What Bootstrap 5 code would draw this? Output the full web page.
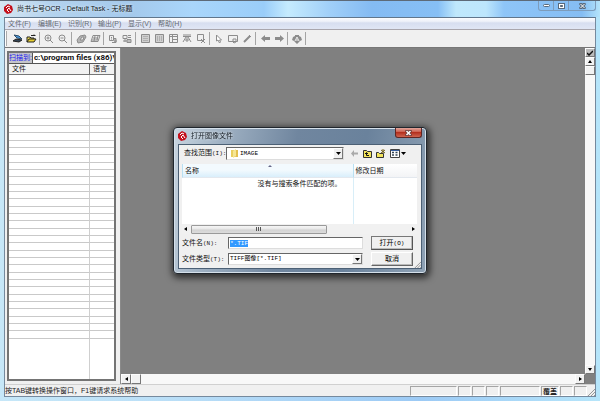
<!DOCTYPE html>
<html lang="zh-CN">
<head>
<meta charset="utf-8">
<meta name="viewport" content="width=device-width, initial-scale=1">
<title>尚书七号OCR - Default Task - 无标题</title>
<link href="https://cdn.jsdelivr.net/npm/bootstrap@5.3.0/dist/css/bootstrap.min.css" rel="stylesheet">
<style>
body{font:7px/10px "Liberation Sans","Noto Sans CJK SC",sans-serif;color:#111;background:#c2e9fb}
button,input,select{font:inherit;color:inherit;border-radius:0}
button{padding:0;border:0;background:none;line-height:10px}
svg{display:block}
.app{background:linear-gradient(90deg,#c6e7f8,#b9def7 30%,#9ccaf5 70%,#b6e5fa);border-top:1px solid #5d6a78}
.sky{height:16px;background:linear-gradient(90deg,#d6e6f2 0,#b4d3ee 8%,#a4c9ec 22%,#a9d6fb 32%,#9acdf9 44%,#c5ebfe 48%,#a0cff8 55%,#84bbf3 62%,#86bff5 73%,#bfe8fc 76%,#bde6fc 81%,#8ec5f8 84%,#85bdf3 97%,#b4e4fa 100%)}
.title-text{font-size:7px;color:#101820;text-shadow:0 0 3px #fff}
.winbtns{height:10px;border:1px solid #7d9cbb;border-top:0;border-radius:0 0 3px 3px}
.winbtns button{width:15px;height:9px;border-right:1px solid #7d9cbb}
.winbtns button:last-child{width:26px;border:0}
.frame-in{margin:0 4px 4px;border:1px solid #75899d;border-top-color:#60768c;background:#f0f0f0}
.menus{height:12px;background:linear-gradient(#fbfcfe,#eef1f9 30%,#d7def0 45%,#dfe5f4 90%);border-bottom:1px solid #a9a6ad;padding-left:3px}
.menus button{width:30px;text-align:left;color:#666b74}
.tools{height:18px;padding-left:5px;border-bottom:1px solid #777;position:relative}
.tools button{width:14px;height:14px;color:#8c8c8c;flex:none}
.tools button svg{margin:auto}
.tsep{width:4px;height:13px;background:linear-gradient(#a4a4a4,#a4a4a4) 1px 0/1px 100% no-repeat;flex:none}
.grip{width:2px;height:15px;border-left:1px solid #fff;border-right:1px solid #aaa}
.side{width:116px;padding:3px 4px 3px 2px;border-right:1px solid #8a8a8a;flex:none}
.files{border:2px solid #747474;background:#fff;overflow:hidden}
.scanrow{height:11px;border-bottom:1px solid #555}
.scanrow button{width:26px;background:#c6c6ca;color:#2020f0;border-right:1px solid #555;white-space:nowrap}
.scanrow input{min-width:0;border:0;padding:0 0 0 1px;background:#fff;font-family:Roboto,"Liberation Sans",sans-serif;font-weight:bold;font-size:8px;outline:0}
.filetable{width:100%;table-layout:fixed;border-collapse:separate;border-spacing:0}
.filetable th{height:11px;padding:0 3px;background:#f2f2f2;font-weight:normal;line-height:10px;border-bottom:1px solid #777}
.filetable th:first-child{border-right:1px solid #666}
.filetable td{height:7px;padding:0;font-size:0;line-height:0;border-bottom:1px solid #c9c9c9}
.filetable tr:nth-child(3n) td{height:8px}
.filetable td:first-child{border-right:1px solid #cfcfcf}
.filetable tr.rest td{border-bottom:0;height:80px}
.canvas-area{background:#808080}
.sbv{width:10px;background:#f8f8f8;flex:none}
.sbh{height:10px;background:#f8f8f8;flex:none}
.sbb{width:10px;height:9px;background:#f2f2f2;border:1px solid;border-color:#fdfdfd #777 #777 #fdfdfd;display:flex;align-items:center;justify-content:center;flex:none}
.sbb.chk{background:#bbb}
.sbh .sbb{height:10px}
.corner{width:10px;height:10px;background:#808080}
.status{height:12px;border-top:1px solid #d0d0d0;color:#222}
.cell{height:10px;border:1px solid;border-color:#a5a5a5 #fff #fff #a5a5a5;margin-right:1px;width:13px;flex:none;line-height:9px;text-align:center;white-space:nowrap}
.cell.wide{width:47px}.cell.mid{width:40px}.cell.ovr{width:18px;font-weight:bold}

.dlg{width:254px;border:1px solid #20262d;border-radius:4px;background:linear-gradient(100deg,#c9d5e0 0,#9fb1c3 18%,#70869f 45%,#6a829c 70%,#8fa2b5 100%);box-shadow:inset 0 0 0 1px #d5e0ea,1px 2px 7px 2px rgba(0,0,0,.65);padding:0 4px 4px}
.dlg-title{height:16px;color:#0c1016}
.closebtn{width:27px;height:10px;border:1px solid #5e2624;border-top:0;border-radius:0 0 3px 3px;background:linear-gradient(#e0a79d,#cc5a4a 45%,#b4301f 50%,#cf6450);align-self:flex-start}
.dlg-body{border:1px solid #4c6075;background:#f0f0f0;padding:2px 4px 2px 3px}
.half{font-family:"Liberation Mono",monospace;font-size:6px}
.field{height:13px;background:#fff;border:1px solid;border-color:#666 #ddd #ddd #666;position:relative}
.field select,.field input{appearance:none;border:0;outline:0;background:transparent;width:100%;height:100%;padding:0 1px;display:block;font:6px/10px "Liberation Mono","Noto Sans CJK SC",monospace;color:#000;caret-color:transparent}
.field.edit{height:12px}
.field input::selection{background:#3399ff;color:#fff}
.drop{position:absolute;right:0;top:0;bottom:0;width:10px;background:#f0f0f0;border:1px solid;border-color:#fff #777 #777 #fff;display:flex;align-items:center;justify-content:center;pointer-events:none}
.look{width:118px}
.look-label{width:44px;padding-left:2px}
.list{background:#fff;position:relative}
.list table{width:100%;table-layout:fixed;border-collapse:separate;border-spacing:0}
.list th{height:14px;padding:0 2px;font-weight:normal;line-height:10px;background:linear-gradient(#fff,#f3f4f6);border-bottom:1px solid #e3e8ee}
.list th:first-child{background:linear-gradient(#f3fafe 45%,#d9effb);border-right:1px solid #b9e0f2;border-left:1px solid #b9e0f2;position:relative}
.list td{height:46px;padding:0;vertical-align:top}
.list td:first-child{border-right:1px solid #d8eef8}
.sortmark{position:absolute;top:1px;left:50%}
.empty-note{position:absolute;top:15px;left:0;right:0;text-align:center}
.hbar{height:10px;background:#f1f1f1;padding:0 2px}
.hbar .thumb{width:136px;height:9px;margin-left:4px;border:1px solid #9a9a9a;border-radius:1px;background:linear-gradient(#f6f6f6,#e6e6e6 48%,#d2d2d2 52%,#dcdcdc)}
.form-grid{display:grid;grid-template-columns:46px minmax(0,1fr) 42px;row-gap:2px;padding:2px 4px 0 0;align-items:center}
.form-grid .dbtn{height:14px;background:#f0f0f0;border:1px solid;border-color:#fff #666 #666 #fff;box-shadow:inset -1px -1px #bbb;color:#000}
.form-grid .dbtn.main{border-color:#777 #555 #555 #777}
.form-grid .field{margin-right:8px}
.iconbtn{width:13px;height:12px;display:flex;align-items:center;justify-content:center}
.sizer{position:absolute;right:0;bottom:0}
</style>
<script src="https://cdn.jsdelivr.net/npm/bootstrap@5.3.0/dist/js/bootstrap.bundle.min.js"></script>
</head>
<body>
<div class="app vh-100 d-flex flex-column overflow-hidden">
  <header class="sky d-flex align-items-center justify-content-between flex-shrink-0 ps-1 pe-1">
    <div class="d-flex align-items-center title-text gap-1 text-nowrap">
      <svg width="9" height="10" viewBox="0 0 9 10"><path d="M4 0 8 2 9 6 7 9 3 10 0 7 0 3Z" fill="#c4101c"/><path d="M2 4 4 2 6 3M3 6 5 4 7 7M3 6l2 2" stroke="#fff" fill="none"/></svg>
      <span>尚书七号OCR - Default Task - 无标题</span>
    </div>
    <div class="winbtns d-flex align-self-start">
      <button aria-label="最小化"><svg class="m-auto" width="7" height="4" viewBox="0 0 7 4"><rect x=".5" y=".5" width="6" height="2" rx="1" fill="#fff" stroke="#596a7c"/></svg></button>
      <button aria-label="最大化"><svg class="m-auto" width="7" height="6" viewBox="0 0 7 6"><rect x=".5" y=".5" width="6" height="5" fill="#fff" stroke="#596a7c"/><path d="M2.500 2.500h2v1h-2z" stroke="#596a7c"/></svg></button>
      <button aria-label="关闭"><svg class="m-auto" width="7" height="6" viewBox="0 0 7 6"><path d="m1 0 5 6M6 0 1 6" stroke="#596a7c" stroke-width="3"/><path d="m1.500 1 4 4M5.500 1l-4 4" stroke="#fff"/></svg></button>
    </div>
  </header>

  <div class="frame-in flex-grow-1 d-flex flex-column overflow-hidden">
    <nav class="menus d-flex align-items-center flex-shrink-0" aria-label="菜单">
      <button>文件(F)</button><button>编辑(E)</button><button>识别(R)</button><button>输出(P)</button><button>显示(V)</button><button>帮助(H)</button>
    </nav>

    <div class="tools d-flex align-items-center flex-shrink-0" role="toolbar" aria-label="工具">
      <span class="grip position-absolute start-0"></span>
      <button aria-label="扫描"><svg width="11" height="9" viewBox="0 0 11 9"><path d="m2 1 5 1 3 3-5-1Z" fill="#4a9be0" stroke="#2b4a66"/><path d="m1 7 3-2 6 1-3 2Z" fill="#345" stroke="#222"/></svg></button>
      <button aria-label="打开"><svg width="11" height="9" viewBox="0 0 11 9"><path d="M1 8V3h3l1 1h3v1" fill="#ecd94c" stroke="#222"/><path d="m1 8 2-3h7L8 8Z" fill="#e8d030" stroke="#222"/><path d="M5 1.500h4m-1-1 1.500 1.500" stroke="#222" fill="none"/></svg></button>
      <span class="tsep"></span>
      <button aria-label="放大"><svg width="10" height="10" viewBox="0 0 10 10" fill="none" stroke="currentColor"><circle cx="4" cy="4" r="3"/><path d="M6 6l3 3M2.500 4h3M4 2.500v3"/></svg></button>
      <button aria-label="缩小"><svg width="10" height="10" viewBox="0 0 10 10" fill="none" stroke="currentColor"><circle cx="4" cy="4" r="3"/><path d="M6 6l3 3M2.500 4h3"/></svg></button>
      <span class="tsep"></span>
      <button aria-label="旋转"><svg width="11" height="10" viewBox="0 0 11 10" stroke="currentColor"><path d="M1 6 4 2l5-1 1 2-3 5-5 1Z" fill="#b5b5b5"/><path d="m4 6 2-3 2 0-1 3Z" fill="#eee"/></svg></button>
      <button aria-label="倾斜校正"><svg width="11" height="9" viewBox="0 0 11 9" stroke="currentColor" fill="none"><path d="M3 1.500h7L8 7.500H1Z"/><path d="M3 4h5M2 6h6M5 2 4 7M8 2 7 6"/></svg></button>
      <span class="tsep"></span>
      <button aria-label="版面分析"><svg width="10" height="10" viewBox="0 0 10 10" stroke="currentColor" fill="none"><path d="M1.500 1.500h4v5h-4zM3 3.500h1M3 5h1M5 4.500h3v4H4M6 7h3M7 5v4"/></svg></button>
      <button aria-label="识别"><svg width="10" height="10" viewBox="0 0 10 10" stroke="currentColor" fill="none"><path d="M1 1.500h4v3H1zM6 1.500h3M6 3.500h3M3 5v3M5 5.500h4v3H5zM1 7h8"/></svg></button>
      <span class="tsep"></span>
      <button aria-label="横栏"><svg width="9" height="9" viewBox="0 0 9 9" stroke="currentColor" fill="#d0d0d0"><path d="M.5.500h8v8h-8z"/><path d="M2 2.500h5M2 4.500h5M2 6.500h5" stroke="#b0b0b0"/></svg></button>
      <button aria-label="竖栏"><svg width="9" height="9" viewBox="0 0 9 9" stroke="currentColor" fill="#d0d0d0"><path d="M.5.500h8v8h-8z"/><path d="M2.500 2v5M4.500 2v5M6.500 2v5" stroke="#b0b0b0"/></svg></button>
      <button aria-label="表格栏"><svg width="9" height="9" viewBox="0 0 9 9" stroke="currentColor" fill="none"><path d="M.5.500h8v8h-8zM3.500 1v7.500M3.500 5.500h5M0 2.500h9"/></svg></button>
      <button aria-label="图像栏"><svg width="10" height="9" viewBox="0 0 10 9" stroke="currentColor" fill="none"><path d="M1 1h8M1 2.500h8M4 3 1 8M6 3l3 5M5 3v5M3 6h4"/></svg></button>
      <button aria-label="删除栏"><svg width="10" height="10" viewBox="0 0 10 10" stroke="currentColor" fill="none"><path d="M1.500.500h6v6h-6zM5 5l4 4M9 5 5 9"/></svg></button>
      <span class="tsep"></span>
      <button aria-label="选择"><svg width="8" height="10" viewBox="0 0 8 10" stroke="currentColor" fill="#fff"><path d="M1.500 1v6l1.500-1 1.500 3 1-1-1-2h2Z"/></svg></button>
      <button aria-label="区域"><svg width="10" height="10" viewBox="0 0 10 10" stroke="currentColor" fill="none"><path d="M.5 1.500h9v6h-9zM5 5h3v3L6 9 5 8Z"/></svg></button>
      <button aria-label="画笔"><svg width="9" height="9" viewBox="0 0 9 9" stroke="currentColor"><path d="M1 8 7 2" stroke-width="2"/><path d="m6 1 2 2"/></svg></button>
      <span class="tsep"></span>
      <button aria-label="上一页"><svg width="9" height="7" viewBox="0 0 9 7"><path d="M0 3.500 4 0v2h5v3H4v2Z" fill="currentColor"/></svg></button>
      <button aria-label="下一页"><svg width="9" height="7" viewBox="0 0 9 7"><path d="M9 3.500 5 0v2H0v3h5v2Z" fill="currentColor"/></svg></button>
      <span class="tsep"></span>
      <button aria-label="关于"><svg width="10" height="10" viewBox="0 0 10 10"><path d="M3 1h4v1l2 1 1 3-2 1-3 3-3-3-2-1 1-3 2-1Z" fill="currentColor"/><path d="M3 7 5 3l2 4M5 5v2" stroke="#eee" fill="none"/></svg></button>
      <span class="tsep"></span>
    </div>

    <div class="d-flex flex-grow-1 overflow-hidden">
      <aside class="side d-flex flex-column">
        <div class="files flex-grow-1">
          <div class="scanrow d-flex">
            <button id="scan">扫描到:</button>
            <input class="flex-grow-1" aria-labelledby="scan" value="c:\program files (x86)\j">
          </div>
          <table class="filetable">
            <colgroup><col><col style="width:24px"></colgroup>
            <thead><tr><th>文件</th><th>语言</th></tr></thead>
            <tbody id="rows"></tbody>
          </table>
        </div>
      </aside>

      <main class="flex-grow-1 d-flex flex-column">
        <div class="d-flex flex-grow-1">
          <div class="canvas-area flex-grow-1"></div>
          <div class="sbv d-flex flex-column">
            <button class="sbb chk" aria-label="确认"><svg width="6" height="6" viewBox="0 0 6 6"><path d="m0 3 2 2 4-4" stroke="#111" stroke-width="1.500" fill="none"/></svg></button>
            <button class="sbb" aria-label="向上"><svg width="4" height="3" viewBox="0 0 4 3"><path d="M0 3h4L2 0Z"/></svg></button>
            <span class="sbb"></span>
            <button class="sbb mt-auto" aria-label="向下"><svg width="4" height="3" viewBox="0 0 4 3"><path d="M0 0h4L2 3Z"/></svg></button>
          </div>
        </div>
        <div class="sbh d-flex">
          <button class="sbb" aria-label="向左"><svg width="3" height="4" viewBox="0 0 3 4"><path d="M3 0v4L0 2Z"/></svg></button>
          <span class="sbb"></span>
          <button class="sbb ms-auto" aria-label="向右"><svg width="3" height="4" viewBox="0 0 3 4"><path d="M0 0v4l3-2Z"/></svg></button>
          <span class="corner"></span>
        </div>
      </main>
    </div>

    <footer class="status d-flex align-items-center flex-shrink-0 position-relative">
      <span class="me-auto text-nowrap">按TAB键转换操作窗口，F1键请求系统帮助</span>
      <span class="cell wide"></span><span class="cell"></span><span class="cell"></span><span class="cell"></span><span class="cell mid"></span><span class="cell ovr">覆盖</span><span class="cell"></span><span class="cell me-2"></span>
      <svg class="sizer" width="8" height="8" viewBox="0 0 8 8"><path d="m1 8 7-7M4 8l4-4M7 8l1-1" stroke="#999"/></svg>
    </footer>
  </div>
</div>

<div class="position-fixed top-0 start-0 w-100 h-100 d-flex align-items-center justify-content-center">
  <section class="dlg" role="dialog" aria-labelledby="dlgTitle">
    <div class="dlg-title d-flex align-items-center justify-content-between">
      <div class="d-flex align-items-center gap-1">
        <svg width="9" height="10" viewBox="0 0 9 10"><path d="M4 0 8 2 9 6 7 9 3 10 0 7 0 3Z" fill="#c4101c"/><path d="M2 4 4 2 6 3M3 6 5 4 7 7M3 6l2 2" stroke="#fff" fill="none"/></svg>
        <span id="dlgTitle" class="title-text">打开图像文件</span>
      </div>
      <button class="closebtn" aria-label="关闭"><svg class="m-auto" width="7" height="6" viewBox="0 0 7 6"><path d="m1 0 5 6M6 0 1 6" stroke="#6b3a38" stroke-width="3"/><path d="m1.500 1 4 4M5.500 1l-4 4" stroke="#fff" stroke-width="1.500"/></svg></button>
    </div>
    <form class="dlg-body position-relative" onsubmit="return false">
      <div class="d-flex align-items-center mb-1">
        <label for="look" class="look-label text-nowrap">查找范围<span class="half">(I):</span></label>
        <div class="field look d-flex align-items-center">
          <svg class="ms-1 flex-shrink-0" width="8" height="9" viewBox="0 0 8 9"><path d="M0 1h3l1 7H0Z" fill="#e9cf60"/><path d="m2 2 3-2v7L2 9Z" fill="#f6e694"/><path d="M5 1h2v7H3l2-1Z" fill="#e3bf4d"/></svg>
          <select id="look"><option>IMAGE</option></select>
          <span class="drop"><svg width="5" height="3" viewBox="0 0 5 3"><path d="M0 0h5L2.500 3Z"/></svg></span>
        </div>
        <div class="d-flex ms-1">
          <button type="button" class="iconbtn" aria-label="后退"><svg width="7" height="7" viewBox="0 0 7 7"><path d="M0 3.500 3 0v2.500h4v2H3V7Z" fill="#aaa"/></svg></button>
          <button type="button" class="iconbtn" aria-label="向上一级"><svg width="9" height="8" viewBox="0 0 9 8"><path d="M.5 7.500v-7h3l1 1h4v6Z" fill="#f3e45c" stroke="#333"/><path d="M3.500 3v2.500H6M2 4l1.500-1.500L5 4" stroke="#111" fill="none"/></svg></button>
          <button type="button" class="iconbtn" aria-label="新建文件夹"><svg width="10" height="9" viewBox="0 0 10 9"><path d="M.5 8.500v-5h2l1 1h4v4Z" fill="#f3e45c" stroke="#333"/><path d="m5 4 4-3M7 0v4M5 1l4 3" stroke="#77651c"/></svg></button>
          <button type="button" class="iconbtn ms-1" aria-label="查看"><svg class="flex-shrink-0" width="16" height="9" viewBox="0 0 16 9"><path d="M.5.500h9v8h-9z" fill="#fff" stroke="#444"/><path d="M1 1h8v1H1z" fill="#345da0"/><path d="M2 3.500h2M5.500 3.500h2M2 6h2M5.500 6h2" stroke="#345" stroke-width="1.500"/><path d="M11 3h5l-2.500 3Z"/></svg></button>
        </div>
      </div>

      <div class="list">
        <table>
          <colgroup><col style="width:73%"><col></colgroup>
          <thead><tr><th>名称<svg class="sortmark" width="4" height="2" viewBox="0 0 4 2"><path d="M0 2h4L2 0Z" fill="#668"/></svg></th><th>修改日期</th></tr></thead>
          <tbody><tr><td></td><td></td></tr></tbody>
        </table>
        <div class="empty-note">没有与搜索条件匹配的项。</div>
        <div class="hbar d-flex align-items-center">
          <svg width="3" height="4" viewBox="0 0 3 4"><path d="M3 0v4L0 2Z"/></svg>
          <span class="thumb d-flex"><svg class="m-auto" width="6" height="4" viewBox="0 0 6 4"><path d="M.5 0v4M2.500 0v4M4.500 0v4" stroke="#555"/></svg></span>
          <svg class="ms-auto" width="3" height="4" viewBox="0 0 3 4"><path d="M0 0v4l3-2Z"/></svg>
        </div>
      </div>

      <div class="form-grid">
        <label for="fname">文件名<span class="half">(N):</span></label>
        <div class="field edit"><input id="fname" value="*.TIF"></div>
        <button class="dbtn main">打开<span class="half">(O)</span></button>
        <label for="ftype" class="text-nowrap">文件类型<span class="half">(T):</span></label>
        <div class="field edit"><select id="ftype"><option>TIFF图像[*.TIF]</option></select><span class="drop"><svg width="5" height="3" viewBox="0 0 5 3"><path d="M0 0h5L2.500 3Z"/></svg></span></div>
        <button type="button" class="dbtn">取消</button>
      </div>
      <svg class="sizer" width="7" height="7" viewBox="0 0 8 8"><path d="m1 8 7-7M4 8l4-4M7 8l1-1" stroke="#888"/></svg>
    </form>
  </section>
</div>
<script>
document.getElementById('rows').innerHTML = '<tr><td></td><td></td></tr>'.repeat(36) + '<tr class="rest"><td></td><td></td></tr>';
const nameBox = document.getElementById('fname');
nameBox.focus();
nameBox.select();
</script>
</body>
</html>
